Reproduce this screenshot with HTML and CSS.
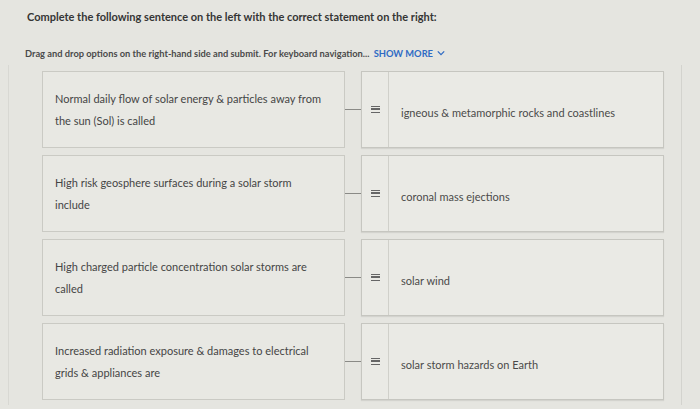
FILE: index.html
```html
<!DOCTYPE html>
<html>
<head>
<meta charset="utf-8">
<link rel="stylesheet" href="styles.css">
</head>
<body>
<div class="page">
  <h1 class="title">Complete the following sentence on the left with the correct statement on the right:</h1>
  <p class="hint">Drag and drop options on the right-hand side and submit. For keyboard navigation... <span class="more">SHOW MORE <svg class="chev" viewBox="0 0 10 6" width="8" height="6"><path d="M1 1 L5 5 L9 1" fill="none" stroke="#2f6bc4" stroke-width="1.6"/></svg></span></p>
  <div class="frame">
    <div class="rows">
      <div class="row">
        <div class="prompt"><p>Normal daily flow of solar energy &amp; particles away from</p><p>the sun (Sol) is called</p></div>
        <div class="link"></div>
        <div class="answer"><div class="handle"><span class="grip"></span></div><div class="label">igneous &amp; metamorphic rocks and coastlines</div></div>
      </div>
      <div class="row">
        <div class="prompt"><p>High risk geosphere surfaces during a solar storm</p><p>include</p></div>
        <div class="link"></div>
        <div class="answer"><div class="handle"><span class="grip"></span></div><div class="label">coronal mass ejections</div></div>
      </div>
      <div class="row">
        <div class="prompt"><p>High charged particle concentration solar storms are</p><p>called</p></div>
        <div class="link"></div>
        <div class="answer"><div class="handle"><span class="grip"></span></div><div class="label">solar wind</div></div>
      </div>
      <div class="row">
        <div class="prompt"><p>Increased radiation exposure &amp; damages to electrical</p><p>grids &amp; appliances are</p></div>
        <div class="link"></div>
        <div class="answer"><div class="handle"><span class="grip"></span></div><div class="label">solar storm hazards on Earth</div></div>
      </div>
    </div>
  </div>
</div>
</body>
</html>
```
FILE: styles.css
```css
html, body {
  margin: 0;
  padding: 0;
  background: #e5e5e0;
}
body {
  width: 700px;
  height: 409px;
  overflow: hidden;
  font-family: Lato, "Liberation Sans", sans-serif;
  color: #3d3d3d;
}
.page {
  padding: 9px 0 0 0;
}
.title {
  margin: 0 0 0 27px;
  font-size: 11px;
  font-weight: 700;
  line-height: 16px;
  color: #353535;
}
.hint {
  margin: 22px 0 0 25px;
  font-size: 9.3px;
  font-weight: 700;
  line-height: 14px;
  color: #4a4a4a;
}
.more {
  color: #2f6bc4;
  margin-left: 2px;
}
.chev {
  vertical-align: 1px;
  margin-left: 2px;
}
.frame {
  margin: 4px 0 0 8px;
  width: 672px;
  border-left: 1px solid #d8d8d3;
  border-right: 1px solid #d3d3ce;
  height: 340px;
}
.rows {
  display: flex;
  flex-direction: column;
  gap: 7px;
  padding: 6px 0 0 33px;
}
.row {
  display: flex;
  align-items: center;
  height: 77px;
}
.prompt {
  box-sizing: border-box;
  width: 303px;
  height: 77px;
  border: 1px solid #cacac4;
  background: #e8e8e3;
  padding: 16px 12px 0 12px;
  font-size: 11px;
  color: #454545;
}
.prompt p {
  margin: 0;
  line-height: 22px;
}
.link {
  width: 16px;
  height: 1px;
  background: #8a8a86;
}
.answer {
  box-sizing: border-box;
  width: 303px;
  height: 77px;
  border: 1px solid #c6c6c0;
  background: #eaeae5;
  display: flex;
  box-shadow: 0 1px 1px rgba(0,0,0,0.08);
}
.handle {
  width: 26px;
  border-right: 1px solid #d0d0ca;
  display: flex;
  align-items: center;
  justify-content: center;
}
.grip {
  display: block;
  width: 9px;
  height: 7px;
  border-top: 1.5px solid #666;
  border-bottom: 1.5px solid #666;
  position: relative;
  box-sizing: border-box;
}
.grip::after {
  content: "";
  position: absolute;
  left: 0;
  right: 0;
  top: 1.25px;
  height: 1.5px;
  background: #666;
}
.label {
  display: flex;
  align-items: center;
  padding: 6px 0 0 12px;
  font-size: 11px;
  color: #4a4a4a;
}
```
